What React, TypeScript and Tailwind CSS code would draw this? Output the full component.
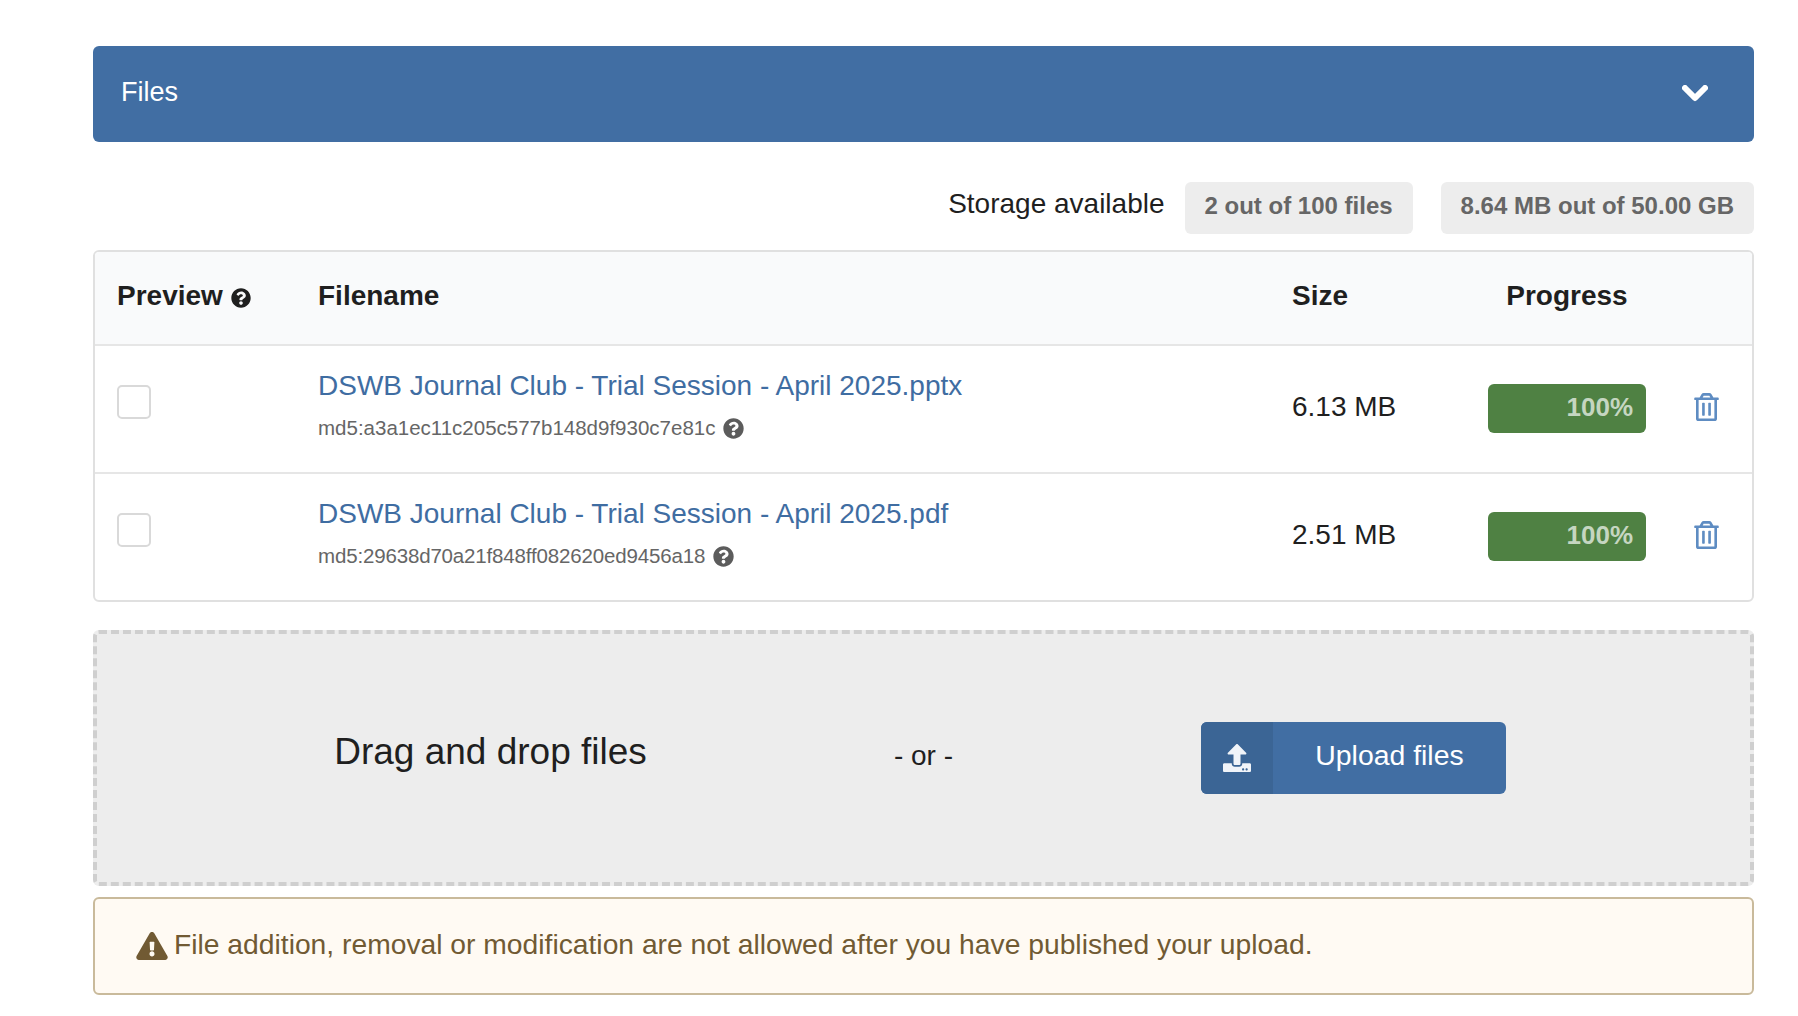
import { FaExclamationTriangle, FaQuestionCircle, FaRegTrashAlt, FaUpload } from "react-icons/fa";

const FILES = [
  { name: "DSWB Journal Club - Trial Session - April 2025.pptx", md5: "md5:a3a1ec11c205c577b148d9f930c7e81c", size: "6.13 MB", hashClass: "tracking-normal" },
  { name: "DSWB Journal Club - Trial Session - April 2025.pdf", md5: "md5:29638d70a21f848ff082620ed9456a18", size: "2.51 MB", hashClass: "tracking-[-0.16px]" },
];

function Badge({ children }: { children: React.ReactNode }) {
  return (
    <span className="flex h-[52px] items-center rounded-[6px] bg-[#ededed] px-5 pb-[5px] text-[24px] font-bold text-[#666666]">
      {children}
    </span>
  );
}

function FileRow({ name, md5, size, hashClass }: { name: string; md5: string; size: string; hashClass: string }) {
  return (
    <div className="flex h-[128px] items-center border-t-2 border-[#e6e6e6] pl-[22px] pr-[33px]">
      <div className="w-[201px] pb-[14px]">
        <div className="h-[34px] w-[34px] rounded-[5px] border-2 border-[#d9d9d9] bg-white" />
      </div>
      <div className="flex-1 pb-[8px]">
        <div className="text-[28px] leading-[36px] text-[#3f6da2]">{name}</div>
        <div className="mt-[10px] flex items-center gap-[8px] text-[20.5px] leading-[28px] text-[#666666]">
          <span className={hashClass}>{md5}</span>
          <FaQuestionCircle className="h-[21px] w-[21px] text-[#5c5c5c]" />
        </div>
      </div>
      <div className="w-[196px] pb-[4px] text-[28px] text-[#1f1f1f]">{size}</div>
      <div className="mb-[2px] flex h-[49px] w-[158px] items-center justify-end rounded-[6px] bg-[#4f8143] pb-[2px] pr-[13px] text-[26px] font-bold text-[#c5d6c1]">
        100%
      </div>
      <FaRegTrashAlt className="mb-[4px] ml-[48px] h-[28px] w-[25px] text-[#5e8cc2]" />
    </div>
  );
}

export default function App() {
  return (
    <div
      className="min-h-[1016px] bg-white pb-[22px] pl-[93px] pr-[44px] pt-[46px]"
      style={{ fontFamily: "'Liberation Sans', Arial, sans-serif" }}
    >
      <div className="flex h-[96px] items-start justify-between rounded-[6px] bg-[#416ea3] pl-[28px] pr-[46px] pt-[30px] text-white">
        <span className="text-[27px] leading-[32px]">Files</span>
        <svg viewBox="0 0 26 17" className="mt-[9px] h-[17px] w-[26px]" fill="none" stroke="currentColor" strokeWidth="6" strokeLinecap="round" strokeLinejoin="round" aria-hidden="true">
          <polyline points="3,3 13,13 23,3" />
        </svg>
      </div>

      <div className="mt-[40px] flex items-center justify-end">
        <span className="mr-[20px] pb-[8px] text-[28px] text-[#1f1f1f]">Storage available</span>
        <div className="flex gap-[28px]">
          <Badge>2 out of 100 files</Badge>
          <Badge>8.64 MB out of 50.00 GB</Badge>
        </div>
      </div>

      <div className="mt-[16px] overflow-hidden rounded-[6px] border-2 border-[#e0e0e0]">
        <div className="flex h-[92px] items-center bg-[#f9fafb] pb-[4px] pl-[22px] pr-[34px] text-[28px] font-bold text-[#1f1f1f]">
          <div className="flex w-[201px] items-center gap-[8px]">
            Preview
            <FaQuestionCircle className="mt-[3px] h-[20px] w-[20px]" />
          </div>
          <div className="flex-1">Filename</div>
          <div className="w-[196px]">Size</div>
          <div className="w-[158px] text-center">Progress</div>
          <div className="w-[72px]" />
        </div>
        {FILES.map((f) => (
          <FileRow key={f.md5} name={f.name} md5={f.md5} size={f.size} hashClass={f.hashClass} />
        ))}
      </div>

      <div className="mt-[28px] flex h-[256px] items-center justify-center rounded-[6px] border-4 border-dashed border-[#cfcfcf] bg-[#ededed]">
        <div className="w-[433px] pb-[12px] text-center text-[37px] text-[#1f1f1f]">Drag and drop files</div>
        <div className="w-[433px] pb-[4px] text-center text-[28px] text-[#1f1f1f]">- or -</div>
        <div className="flex w-[433px] justify-center pr-[6px]">
          <div className="flex h-[72px] w-[305px] overflow-hidden rounded-[6px] bg-[#416ea3] text-white">
            <div className="flex w-[72px] items-center justify-center bg-[#3b6595]">
              <FaUpload className="h-[28px] w-[28px] text-[#f0f4f9]" />
            </div>
            <div className="flex flex-1 items-center justify-center pb-[6px] text-[28.4px]">Upload files</div>
          </div>
        </div>
      </div>

      <div className="mt-[11px] flex h-[98px] items-center gap-[6px] rounded-[6px] border-2 border-[#c9ba9b] bg-[#fffaf3] pl-[41px] text-[28.25px] text-[#715a33]">
        <FaExclamationTriangle className="h-[28px] w-[32px]" />
        <span className="pb-[4px]">File addition, removal or modification are not allowed after you have published your upload.</span>
      </div>
    </div>
  );
}
